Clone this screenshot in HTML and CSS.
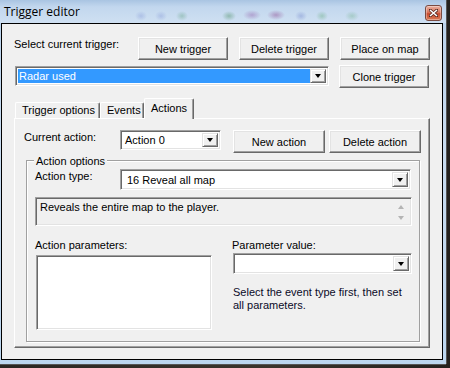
FILE: index.html
```html
<!DOCTYPE html>
<html>
<head>
<meta charset="utf-8">
<link rel="stylesheet" href="styles.css">
</head>
<body>
<div class="window">
  <div class="titlebar">
    <span class="title">Trigger editor</span>
    <div class="close">
      <svg width="9" height="8" viewBox="0 0 9 8"><path d="M1 1 L8 7 M8 1 L1 7" stroke="#5a2a20" stroke-width="3" stroke-linecap="square"/><path d="M1 1 L8 7 M8 1 L1 7" stroke="#fff" stroke-width="1.6"/></svg>
    </div>
  </div>
  <div class="client">
    <div class="row1">
      <span class="lbl lbl-trigger">Select current trigger:</span>
      <button class="btn btn-top">New trigger</button>
      <button class="btn btn-top">Delete trigger</button>
      <button class="btn btn-top">Place on map</button>
    </div>
    <div class="row2">
      <div class="combo combo-trigger">
        <div class="combo-text selected">Radar used</div>
        <div class="drop"><span class="arrow"></span></div>
      </div>
      <button class="btn btn-clone">Clone trigger</button>
    </div>
    <div class="tabs">
      <div class="tab tab-opts">Trigger options</div>
      <div class="tab tab-events">Events</div>
      <div class="tab tab-actions active">Actions</div>
    </div>
    <div class="panel">
      <div class="row-action">
        <span class="lbl lbl-action">Current action:</span>
        <div class="combo combo-action">
          <div class="combo-text">Action 0</div>
          <div class="drop"><span class="arrow"></span></div>
        </div>
        <button class="btn btn-act btn-new">New action</button>
        <button class="btn btn-act btn-del">Delete action</button>
      </div>
      <div class="group">
        <span class="legend">Action options</span>
        <div class="row-type">
          <span class="lbl lbl-type">Action type:</span>
          <div class="combo combo-type">
            <div class="combo-text">16 Reveal all map</div>
            <div class="drop"><span class="arrow"></span></div>
          </div>
        </div>
        <div class="desc">
          <span class="desc-text">Reveals the entire map to the player.</span>
          <div class="vscroll">
            <span class="sarrow up"></span>
            <span class="sarrow down"></span>
          </div>
        </div>
        <div class="lower">
          <div class="col-left">
            <div class="lbl">Action parameters:</div>
            <div class="listbox"></div>
          </div>
          <div class="col-right">
            <div class="lbl">Parameter value:</div>
            <div class="combo combo-value">
              <div class="combo-text"></div>
              <div class="drop"><span class="arrow"></span></div>
            </div>
            <div class="help">Select the event type first, then set all parameters.</div>
          </div>
        </div>
      </div>
    </div>
  </div>
</div>
</body>
</html>
```
FILE: styles.css
```css
html, body {
  margin: 0;
  padding: 0;
}
body {
  width: 450px;
  height: 368px;
  overflow: hidden;
  background: linear-gradient(90deg, #2a2622 0%, #3a342c 60%, #24211e 100%);
}
.window {
  width: 446px;
  height: 364px;
  background: linear-gradient(180deg, #b9d2ec 0%, #c9dcf0 40%, #bcd6ef 100%);
  box-shadow: 1px 0 0 #555, 0 1px 0 #555;
}
.titlebar {
  height: 23px;
  display: flex;
  align-items: flex-start;
  justify-content: space-between;
  padding-left: 4px;
  box-sizing: border-box;
  background:
    radial-gradient(ellipse 6px 5px at 141px 16px, rgba(90,110,200,0.25), transparent),
    radial-gradient(ellipse 6px 5px at 161px 16px, rgba(90,110,200,0.25), transparent),
    radial-gradient(ellipse 6px 5px at 182px 16px, rgba(60,140,90,0.3), transparent),
    radial-gradient(ellipse 7px 5px at 229px 16px, rgba(40,120,60,0.35), transparent),
    radial-gradient(ellipse 9px 5px at 252px 15px, rgba(130,60,150,0.35), transparent),
    radial-gradient(ellipse 9px 5px at 276px 15px, rgba(130,50,130,0.4), transparent),
    radial-gradient(ellipse 6px 5px at 301px 16px, rgba(80,100,190,0.3), transparent),
    radial-gradient(ellipse 6px 5px at 322px 16px, rgba(60,150,80,0.3), transparent),
    radial-gradient(ellipse 7px 5px at 352px 16px, rgba(60,150,80,0.25), transparent),
    linear-gradient(180deg, #a9c4e2 0%, #c2d7ee 30%, #cfe0f2 100%);
}
.title {
  font-family: "Open Sans", "Liberation Sans", sans-serif;
  font-size: 12px;
  line-height: 16px;
  padding-top: 4px;
  color: #000;
}
.close {
  width: 17px;
  height: 16px;
  margin-top: 5px;
  margin-right: 4px;
  box-sizing: border-box;
  border: 1px solid #7a4a40;
  border-radius: 3px;
  background: linear-gradient(180deg, #eab0a0 0%, #d9765c 45%, #c84a2e 55%, #d87a55 100%);
  display: flex;
  align-items: center;
  justify-content: center;
  box-shadow: inset 0 0 0 1px rgba(255,255,255,0.35);
}
.close svg { display: block; }

.client {
  margin-left: 1px;
  width: 442px;
  height: 337px;
  box-sizing: border-box;
  border: 1px solid #000;
  background: #f0f0f0;
  padding: 13px 0 0 12px;
  font-family: "Liberation Sans", Arial, sans-serif;
  font-size: 11px;
  color: #000;
}
.lbl {
  line-height: 14px;
  white-space: nowrap;
}
.btn {
  font-family: "Liberation Sans", Arial, sans-serif;
  font-size: 11px;
  color: #000;
  background: #f0f0f0;
  border: 1px solid;
  border-color: #fff #696969 #696969 #fff;
  box-shadow: inset -1px -1px 0 #a0a0a0, inset 1px 1px 0 #e3e3e3;
  padding: 0;
  margin: 0;
  height: 23px;
  box-sizing: border-box;
  line-height: 14px;
}
.row1 {
  display: flex;
  height: 23px;
}
.lbl-trigger { width: 124px; }
.btn-top { width: 90px; margin-right: 11px; }

.row2 {
  display: flex;
  height: 23px;
  margin-top: 5px;
}
.combo {
  display: flex;
  box-sizing: border-box;
  border: 1px solid;
  border-color: #a0a0a0 #fff #fff #a0a0a0;
  box-shadow: inset 1px 1px 0 #696969, inset -1px -1px 0 #e3e3e3;
  background: #fff;
  padding: 2px;
}
.combo-text {
  flex: 1;
  line-height: 14px;
  padding-left: 2px;
  display: flex;
  align-items: center;
  white-space: nowrap;
}
.combo-text.selected {
  background: #3399ff;
  color: #fff;
  padding-left: 1px;
}
.drop {
  width: 16px;
  box-sizing: border-box;
  background: #f0f0f0;
  border: 1px solid;
  border-color: #e3e3e3 #696969 #696969 #e3e3e3;
  box-shadow: inset 1px 1px 0 #fff, inset -1px -1px 0 #a0a0a0;
  display: flex;
  align-items: center;
  justify-content: center;
}
.arrow {
  width: 0;
  height: 0;
  border-left: 3.5px solid transparent;
  border-right: 3.5px solid transparent;
  border-top: 4px solid #000;
}
.combo-trigger {
  width: 314px;
  height: 20px;
  margin-left: 1px;
  margin-top: 1px;
}
.btn-clone {
  width: 90px;
  margin-left: 10px;
}

.tabs {
  display: flex;
  align-items: flex-end;
  height: 20px;
  margin-top: 10px;
  position: relative;
  z-index: 1;
}
.tab {
  box-sizing: border-box;
  height: 16px;
  border-top: 1px solid #fff;
  border-left: 1px solid #fff;
  border-right: 1px solid #696969;
  border-radius: 2px 2px 0 0;
  box-shadow: inset -1px 0 0 #a0a0a0;
  padding-left: 6px;
  line-height: 14px;
  white-space: nowrap;
  background: #f0f0f0;
}
.tab-opts { width: 85px; margin-left: 1px; }
.tab-events { width: 44px; margin-left: 0; }
.tab-actions {
  width: 50px;
  height: 21px;
  margin-bottom: -1px;
  padding-top: 2px;
}

.panel {
  width: 416px;
  height: 230px;
  box-sizing: border-box;
  border: 1px solid;
  border-color: #fff #696969 #696969 #fff;
  box-shadow: inset -1px -1px 0 #a0a0a0;
  margin-left: 0;
}
.row-action {
  display: flex;
  align-items: flex-start;
  margin-top: 11px;
  margin-left: 9px;
  height: 23px;
}
.lbl-action { width: 96px; }
.combo-action { width: 101px; height: 20px; }
.btn-act { width: 92px; }
.btn-new { margin-left: 12px; }
.btn-del { margin-left: 4px; }

.group {
  position: relative;
  margin-top: 7px;
  margin-left: 11px;
  width: 394px;
  height: 182px;
  box-sizing: border-box;
  border: 1px solid #a0a0a0;
  box-shadow: 1px 1px 0 #fff, inset 1px 1px 0 #fff;
  padding: 8px 0 0 8px;
}
.legend {
  position: absolute;
  left: 7px;
  top: -7px;
  padding: 0 2px;
  background: #f0f0f0;
  line-height: 14px;
}
.row-type {
  display: flex;
  align-items: flex-start;
}
.lbl-type { width: 85px; }
.combo-type { width: 291px; height: 21px; }
.combo-type .combo-text { padding-left: 4px; }
.combo-action .combo-text { padding-left: 2px; }

.desc {
  margin-top: 7px;
  width: 377px;
  height: 29px;
  box-sizing: border-box;
  border: 1px solid;
  border-color: #a0a0a0 #fff #fff #a0a0a0;
  box-shadow: inset 1px 1px 0 #696969, inset -1px -1px 0 #e3e3e3;
  background: #f0f0f0;
  display: flex;
  padding: 2px 2px 2px 4px;
}
.desc-text {
  flex: 1;
  line-height: 14px;
  white-space: nowrap;
}
.vscroll {
  width: 16px;
  display: flex;
  flex-direction: column;
  align-items: center;
  justify-content: space-between;
  padding: 5px 0 3px;
}
.sarrow {
  width: 0;
  height: 0;
  border-left: 3.5px solid transparent;
  border-right: 3.5px solid transparent;
}
.sarrow.up { border-bottom: 4px solid #b4b4b4; }
.sarrow.down { border-top: 4px solid #b4b4b4; }

.lower {
  display: flex;
  margin-top: 12px;
}
.col-left { width: 197px; }
.listbox {
  margin-top: 3px;
  margin-left: 1px;
  width: 176px;
  height: 75px;
  box-sizing: border-box;
  border: 1px solid;
  border-color: #a0a0a0 #fff #fff #a0a0a0;
  box-shadow: inset 1px 1px 0 #696969, inset -1px -1px 0 #e3e3e3;
  background: #fff;
}
.col-right { width: 182px; }
.combo-value {
  margin-top: 1px;
  margin-left: 1px;
  width: 179px;
  height: 21px;
}
.help {
  margin-top: 12px;
  margin-left: 1px;
  width: 180px;
  line-height: 13px;
  color: #0a0a28;
}
```
